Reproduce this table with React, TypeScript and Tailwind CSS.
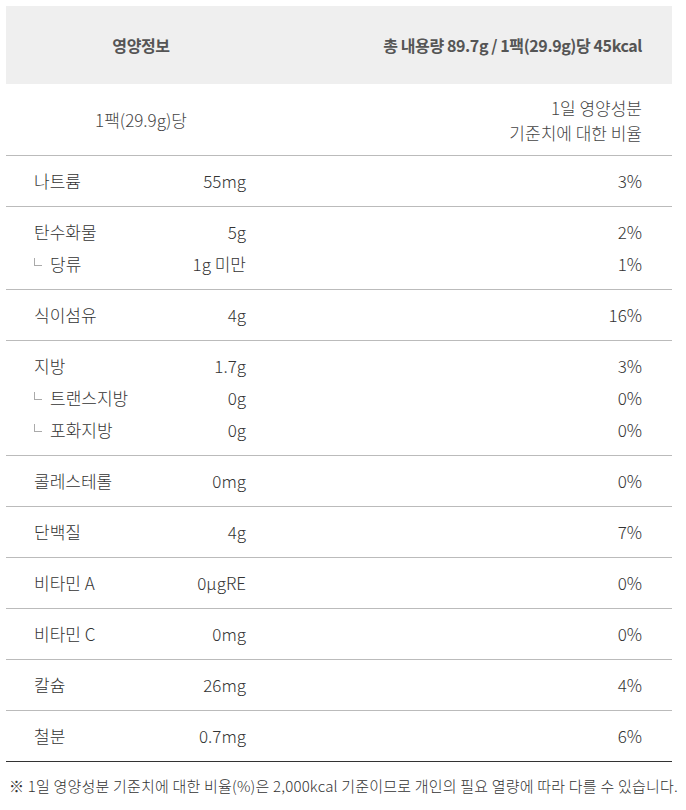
import React from "react";

type Item = { name: string; amount: string; pct: string; sub?: boolean };

const groups: Item[][] = [
  [{ name: "나트륨", amount: "55mg", pct: "3%" }],
  [
    { name: "탄수화물", amount: "5g", pct: "2%" },
    { name: "당류", amount: "1g 미만", pct: "1%", sub: true },
  ],
  [{ name: "식이섬유", amount: "4g", pct: "16%" }],
  [
    { name: "지방", amount: "1.7g", pct: "3%" },
    { name: "트랜스지방", amount: "0g", pct: "0%", sub: true },
    { name: "포화지방", amount: "0g", pct: "0%", sub: true },
  ],
  [{ name: "콜레스테롤", amount: "0mg", pct: "0%" }],
  [{ name: "단백질", amount: "4g", pct: "7%" }],
  [{ name: "비타민 A", amount: "0μgRE", pct: "0%" }],
  [{ name: "비타민 C", amount: "0mg", pct: "0%" }],
  [{ name: "칼슘", amount: "26mg", pct: "4%" }],
  [{ name: "철분", amount: "0.7mg", pct: "6%" }],
];

const Row = ({ item }: { item: Item }) => (
  <div className="flex items-center h-[32px]">
    <div className="w-[212px] flex items-center justify-between">
      <div className="flex items-center">
        {item.sub && (
          <span className="mr-[8px] mb-[5px] w-[8px] h-[8px] border-l border-b border-[#aaa]" />
        )}
        <span>{item.name}</span>
      </div>
      <span>{item.amount}</span>
    </div>
    <div className="flex-1 text-right">{item.pct}</div>
  </div>
);

export default function App() {
  return (
    <div
      className="min-h-screen bg-white text-[#333] pt-[6px] font-light"
      style={{ fontFamily: '"Noto Sans CJK KR", "Noto Sans", sans-serif' }}
    >
      <div className="ml-[6px] w-[666px]">
        <div className="h-[78px] bg-[#efefef] flex items-center text-[16px] font-bold text-[#555] tracking-[-0.4px]">
          <div className="w-[270px] text-center">영양정보</div>
          <div className="flex-1 text-right pr-[30px]">총 내용량 89.7g / 1팩(29.9g)당 45kcal</div>
        </div>
        <div className="h-[72px] flex items-center text-[17px] text-[#444] border-b border-[#bbb]">
          <div className="w-[270px] text-center">1팩(29.9g)당</div>
          <div className="flex-1 text-right pr-[30px] leading-[25px]">
            1일 영양성분
            <br />
            기준치에 대한 비율
          </div>
        </div>
        {groups.map((g, i) => (
          <div
            key={i}
            className={
              "pl-[28px] pr-[30px] py-[9px] text-[17px] border-b " +
              (i === groups.length - 1 ? "border-[#333]" : "border-[#bbb]")
            }
          >
            {g.map((it) => (
              <Row key={it.name} item={it} />
            ))}
          </div>
        ))}
      </div>
      <p className="mt-[13px] ml-[9px] text-[15px] text-[#333] whitespace-nowrap tracking-[0.2px]">
        ※ 1일 영양성분 기준치에 대한 비율(%)은 2,000kcal 기준이므로 개인의 필요 열량에 따라 다를 수 있습니다.
      </p>
    </div>
  );
}
